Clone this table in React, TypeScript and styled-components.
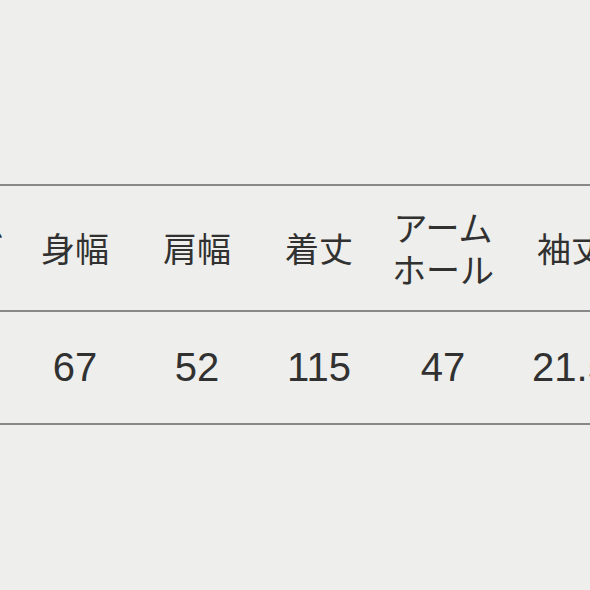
import styled, { createGlobalStyle } from "styled-components";

const GlobalStyle = createGlobalStyle`
  html, body {
    margin: 0;
    padding: 0;
    background: #eeeeec;
  }
  body {
    width: 590px;
    height: 590px;
    overflow: hidden;
    font-family: "Noto Sans CJK JP", "Noto Sans", sans-serif;
    color: #313131;
  }
`;

const Page = styled.div`
  width: 590px;
  height: 590px;
  padding-top: 184px;
  box-sizing: border-box;
  overflow: hidden;
  background: #eeeeec;
`;

const Table = styled.div`
  margin-left: -108px;
  width: 744px;
  border-top: 2px solid #888888;
  border-bottom: 2px solid #888888;
`;

// column widths follow the photo, the right side is a bit wider
const Row = styled.div<{ $height: number; $divider?: boolean }>`
  display: grid;
  grid-template-columns: 122px 122px 122px 122px 126px 130px;
  height: ${p => p.$height}px;
  border-top: ${p => (p.$divider ? "2px solid #888888" : "none")};
`;

const HeadCell = styled.div`
  display: flex;
  align-items: center;
  justify-content: center;
  text-align: center;
  font-size: 34px;
  line-height: 42px;
  white-space: nowrap;
`;

const ValueCell = styled.div`
  display: flex;
  align-items: center;
  justify-content: center;
  font-family: "Liberation Sans", Arial, sans-serif;
  font-size: 40px;
  white-space: nowrap;
`;

const headers = ["サイズ", "身幅", "肩幅", "着丈", "アーム\nホール", "袖丈"];
const values = ["F", "67", "52", "115", "47", "21.5"];

export default function App() {
  return (
    <>
      <GlobalStyle />
      <Page>
        <Table>
          <Row $height={124}>
            {headers.map(h => (
              <HeadCell key={h}>
                <span>
                  {h.split("\n").map(line => (
                    <div key={line}>{line}</div>
                  ))}
                </span>
              </HeadCell>
            ))}
          </Row>
          <Row $height={111} $divider>
            {values.map(v => (
              <ValueCell key={v}>{v}</ValueCell>
            ))}
          </Row>
        </Table>
      </Page>
    </>
  );
}
